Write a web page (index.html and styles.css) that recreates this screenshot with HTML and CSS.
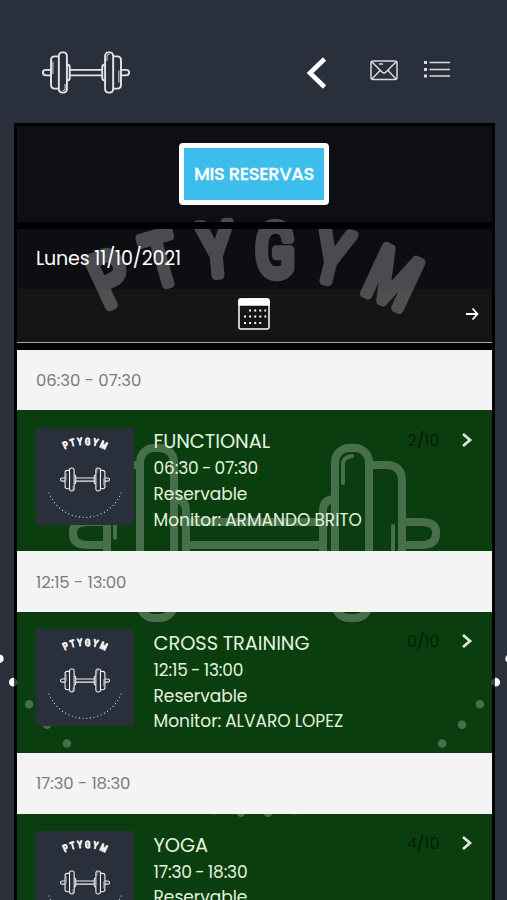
FILE: index.html
```
<!DOCTYPE html>
<html lang="es">
<head>
<meta charset="utf-8">
<title>Mis reservas</title>
<link rel="stylesheet" href="styles.css">
</head>
<body>
<svg class="defs" aria-hidden="true">
  <defs>
    <g id="bell" fill="none" stroke="currentColor" stroke-width="8">
      <g id="bell-half">
        <rect x="335" y="448" width="34" height="170" rx="14"/>
        <path d="M369 465h17q16 0 16 16v104q0 16-16 16h-17"/>
        <path d="M402 522h19q15 0 15 10v2q0 11-15 11h-19"/>
        <path d="M335 499q-12 0-12 12v44q0 12 12 12"/>
      </g>
      <use href="#bell-half" transform="matrix(-1 0 0 1 509 0)"/>
      <path d="M186 522h137M186 545h137"/>
      <path stroke-width="4" stroke-linecap="round" d="M343 483v-19q0-7 9-8M393 526v48M115 538v-50M166 583v19q0 7-8 8"/>
    </g>
    <g id="letters" class="letters">
      <text transform="translate(121 301) rotate(-25) scale(.8 1)">P</text>
      <text transform="translate(168 284) rotate(-16) scale(.78 1)">T</text>
      <text transform="translate(218 275) rotate(-5) scale(.8 1)">Y</text>
      <text transform="translate(275 276) scale(.8 1)">G</text>
      <text transform="translate(326 281) rotate(14) scale(.8 1)">Y</text>
      <text transform="translate(382 301) rotate(25) scale(.78 1)">M</text>
    </g>
    <g id="dots" fill="none" stroke="currentColor" stroke-width="8.6" stroke-linecap="round" stroke-dasharray="0 27.24" stroke-dashoffset="-13.62">
      <path d="M254.5 813A288 288 0 0 1 -16.1 623.5"/>
      <path d="M254.5 813A288 288 0 0 0 525.1 623.5"/>
    </g>
    <g id="logo"><use href="#letters"/><use href="#bell"/><use href="#dots"/></g>
  </defs>
</svg>
<div class="page">
  <svg class="backdrop" viewBox="0 0 507 900"><use href="#dots"/></svg>
  <header class="top">
    <svg class="brand" viewBox="69 443 371 180"><use href="#bell"/></svg>
    <nav class="nav">
      <svg class="back" viewBox="0 0 22 34"><path d="M18.5 3 4 17l14.500 14"/></svg>
      <svg class="mail" viewBox="0 0 28 21"><rect x="1" y="1" width="26" height="18.500" rx="2"/><path d="M2 2l10 10q2 2 4 0L26 2M2 19l8-8.500M26 19l-8-8.500M9 4h4"/></svg>
      <svg class="menu" viewBox="0 0 28 18"><path d="M6.500 2.500H27M6.500 9.500H27M6.500 16H27"/><path class="bullets" d="M1 2.500h3M1 9.500h3M1 16h3"/></svg>
    </nav>
  </header>
  <main class="panel">
    <svg class="watermark" viewBox="0 0 507 900"><use href="#logo"/></svg>
    <section class="actions"><button class="reserve"><span>MIS RESERVAS</span></button></section>
    <div class="divider"></div>
    <section class="date"><span>Lunes 11/10/2021</span></section>
    <section class="picker">
      <svg class="calendar" viewBox="0 0 32 32"><rect x="1" y="1" width="30" height="30" rx="2"/><path class="cal-top" d="M1 3q0-2 2-2h26q2 0 2 2v4H1z"/><path class="cal-dots" d="M11.100 12.500h17M6 18.500h22.300M6 24.900h17.200"/></svg>
      <svg class="next" viewBox="0 0 14 14"><path d="M1 7h11.500M7.500 1.500 12.500 7l-5 5.500"/></svg>
    </section>
    <div class="list">
      <h2 class="slot"><span>06:30 - 07:30</span></h2>
      <article class="card">
        <svg class="thumb" viewBox="-108.500 151.500 726 718"><use href="#logo"/></svg>
        <div class="info">
          <h3>FUNCTIONAL</h3>
          <p class="time">06:30 - 07:30</p>
          <p>Reservable</p>
          <p>Monitor: ARMANDO BRITO</p>
        </div>
        <span class="count">2/10</span>
        <svg class="go" viewBox="0 0 12 16"><path d="m2 2 7 6-7 6"/></svg>
      </article>
      <h2 class="slot"><span class="narrow">12:15 - 13:00</span></h2>
      <article class="card">
        <svg class="thumb" viewBox="-108.500 151.500 726 718"><use href="#logo"/></svg>
        <div class="info">
          <h3>CROSS TRAINING</h3>
          <p class="time">12:15 - 13:00</p>
          <p>Reservable</p>
          <p>Monitor: ALVARO LOPEZ</p>
        </div>
        <span class="count">0/10</span>
        <svg class="go" viewBox="0 0 12 16"><path d="m2 2 7 6-7 6"/></svg>
      </article>
      <h2 class="slot"><span class="narrow">17:30 - 18:30</span></h2>
      <article class="card">
        <svg class="thumb" viewBox="-108.500 151.500 726 718"><use href="#logo"/></svg>
        <div class="info">
          <h3>YOGA</h3>
          <p class="time">17:30 - 18:30</p>
          <p>Reservable</p>
        </div>
        <span class="count">4/10</span>
        <svg class="go" viewBox="0 0 12 16"><path d="m2 2 7 6-7 6"/></svg>
      </article>
    </div>
  </main>
</div>
</body>
</html>
```
FILE: styles.css
```
* { box-sizing: border-box; margin: 0; padding: 0; }
body { background: #292f3b; color: #fff; font-family: Poppins, Inter, "Open Sans", sans-serif; }
.defs { position: absolute; width: 0; height: 0; }
.page { position: relative; height: 900px; overflow: hidden; display: flex; flex-direction: column; }
.backdrop { position: absolute; inset: 0; width: 507px; height: 900px; }
.letters { font: 400 72px Roboto, sans-serif; fill: currentColor; stroke: currentColor; stroke-width: 9.500px; stroke-linejoin: round; text-anchor: middle; }

.top { height: 123px; flex: none; display: flex; align-items: flex-start; justify-content: space-between; padding: 51px 56px 0 42px; color: #e3e5ea; }
.brand { width: 88px; height: 43px; }
.nav { display: flex; align-items: flex-start; padding-top: 1px; fill: none; stroke: #d8dae0; stroke-width: 1.5; }
.back { width: 22px; height: 34px; margin: 4px 42px 0 0; stroke: #fff; stroke-width: 4.6; }
.mail { width: 28px; height: 21px; margin: 8px 25px 0 0; }
.menu { width: 28px; height: 18px; margin-top: 8px; }
.bullets { stroke-width: 3; }

.panel { position: relative; flex: none; width: 481px; height: 777px; margin-left: 13.500px; padding: 3px 3px 0; background: #000; overflow: hidden; }
.watermark { position: absolute; z-index: 1; left: -13.500px; top: -123px; width: 507px; height: 900px; opacity: .25; }
.actions { height: 96px; display: flex; justify-content: center; padding-top: 17px; background: #0d0f12; }
.reserve { position: relative; z-index: 2; width: 150px; height: 62px; border: 5px solid #fff; border-radius: 4px; background: #3dbdec; color: #fff; font: 500 18px Poppins, Inter, sans-serif; letter-spacing: -.4px; -webkit-text-stroke: .3px #fff; white-space: nowrap; display: flex; align-items: center; justify-content: center; padding-bottom: 2px; }
.divider { position: relative; z-index: 2; height: 7px; background: #000; }
.date { height: 60px; background: #0c0e12; padding: 15px 19.500px; font-size: 19px; line-height: 30px; }
.date span { position: relative; z-index: 2; letter-spacing: -.16px; }
.picker { height: 54px; display: flex; align-items: center; justify-content: flex-end; gap: 195px; padding: 0 13px 3px; background: #141517; border-bottom: 1px solid #aaa; }
.calendar, .next { position: relative; z-index: 2; fill: none; stroke: #fff; }
.calendar { width: 32px; height: 32px; stroke-width: 1.5; }
.cal-top { fill: #fff; }
.cal-dots { stroke-width: 2; stroke-dasharray: 2 3.100; }
.next { width: 14px; height: 14px; stroke-width: 1.8; }

.list { margin-top: 6.500px; }
.slot { position: relative; z-index: 2; height: 60.700px; display: flex; align-items: center; padding-left: 19.500px; background: #f4f4f5; color: #7c7c7e; font-size: 16.500px; font-weight: 400; }
.slot span { padding-top: 1px; }
.card { height: 141px; display: flex; align-items: flex-start; background: #0a3e0e; padding: 17.500px 19px 0 19.500px; color: #e3f2df; }
.thumb { position: relative; z-index: 2; flex: none; width: 98px; height: 97px; margin-right: 19.500px; background: #292f3b; color: #f0f2f5; }
.info { position: relative; z-index: 2; flex: 1; padding-top: .5px; font-size: 17px; line-height: 25.700px; word-spacing: -.5px; white-space: nowrap; }
.info h3 { font-size: 19.400px; font-weight: 400; line-height: 28px; letter-spacing: -.05px; }
.info .time { letter-spacing: -.15px; word-spacing: -1px; }
.narrow { letter-spacing: -.05px; }
.count { position: relative; z-index: 2; color: #052006; font-size: 16px; line-height: 24px; margin: 1px 21px 0 0; }
.go { position: relative; z-index: 2; width: 12px; height: 16px; margin-top: 4px; fill: none; stroke: #d9e6d5; stroke-width: 2.800; }
```
